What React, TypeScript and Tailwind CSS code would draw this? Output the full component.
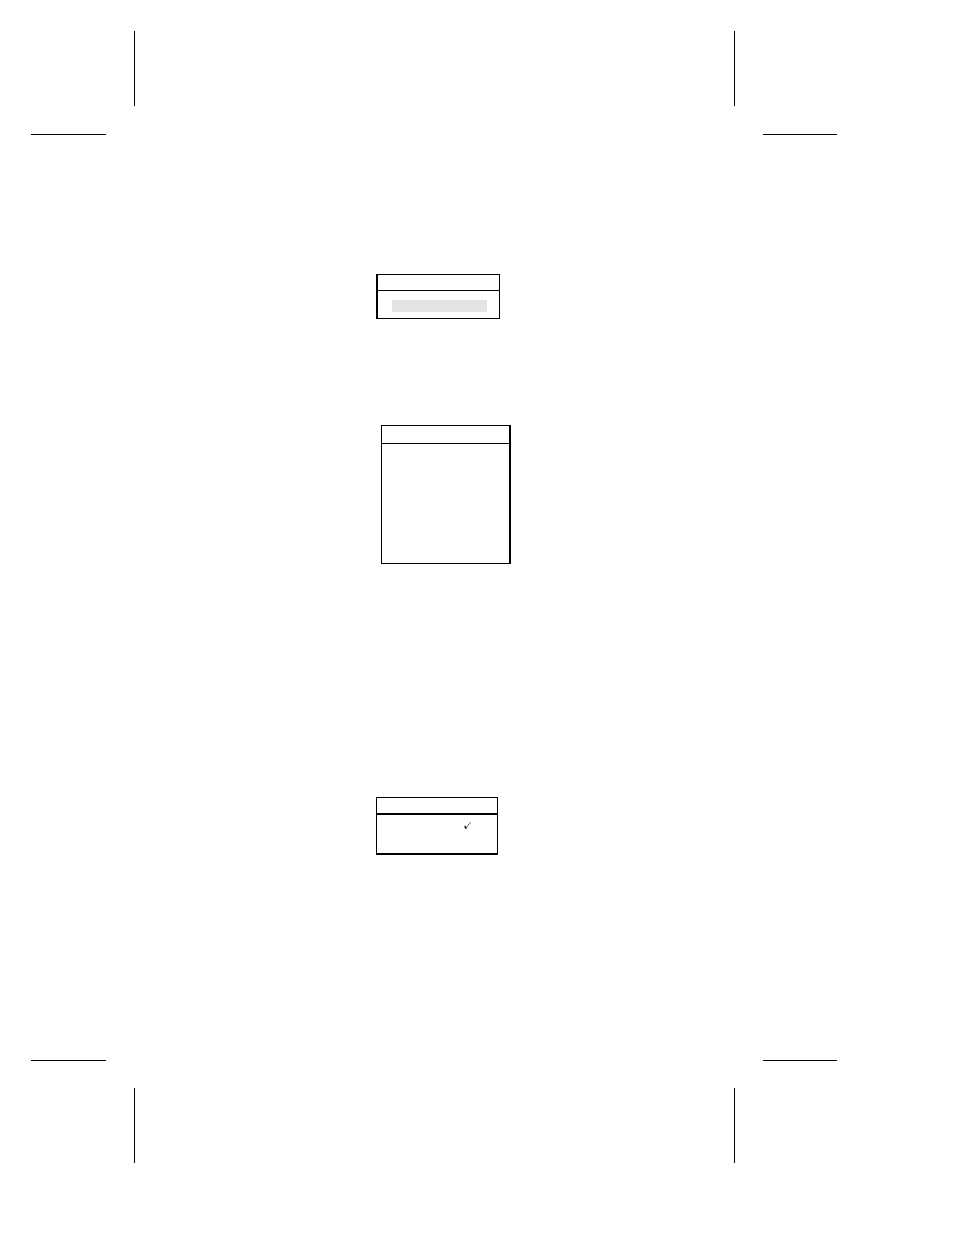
import type { ReactNode } from "react";
import { clsx } from "clsx";

interface MenuPanelProps {
  className?: string;
  headerClassName?: string;
  children?: ReactNode;
}

function MenuPanel({ className, headerClassName, children }: MenuPanelProps) {
  return (
    <section className={clsx("flex flex-col border-black", className)}>
      <header className={clsx("shrink-0 border-black", headerClassName)} />
      {children}
    </section>
  );
}

interface CropMarkProps {
  side: "left" | "right";
  bottom?: boolean;
}

// One page corner: a vertical and a horizontal trim line
function CropMark({ side, bottom }: CropMarkProps) {
  const isLeft = side === "left";

  return (
    <div
      className={clsx(
        "flex justify-between",
        bottom ? "h-[103px] flex-col-reverse" : "h-[104px] flex-col",
        isLeft ? "w-[104px]" : "w-[103px]"
      )}
    >
      <div
        className={clsx(
          "h-[75px] w-px bg-black",
          isLeft ? "self-end" : "self-start"
        )}
      />
      <div
        className={clsx(
          "h-px bg-black",
          isLeft ? "w-[75px] self-start" : "w-[74px] self-end"
        )}
      />
    </div>
  );
}

function CheckMark() {
  return (
    <svg className="h-2 w-2" viewBox="0 0 8 8" fill="none" aria-hidden="true">
      <path d="M0.2 4.3 L1.4 3.6 L2.4 5.6 L2.2 7.1 L1.3 7 Z" fill="#111" />
      <path d="M2 6.7 C3.2 4.2 4.8 2 7 0.2" stroke="#333" strokeWidth="0.8" />
    </svg>
  );
}

export default function App() {
  return (
    <div className="min-h-screen bg-white pt-[31px] pr-[117px] pb-[72px] pl-[31px]">
      <div className="flex justify-between">
        <CropMark side="left" />
        <CropMark side="right" />
      </div>

      <main className="flex flex-col items-start pt-[139px] pb-[205px] pl-[345px]">
        {/* Highlighted entry */}
        <MenuPanel
          className="w-[124px] border border-l-2"
          headerClassName="h-4 border-b"
        >
          <div className="pt-[9px] pr-3 pb-1.5 pl-3.5">
            <div className="h-3 bg-[#e4e4e4]" />
          </div>
        </MenuPanel>

        {/* Empty list */}
        <MenuPanel
          className="mt-[106px] ml-[5px] h-[139px] w-[130px] border border-r-2"
          headerClassName="h-[18px] border-b"
        />

        {/* Ticked entry */}
        <MenuPanel
          className="mt-[233px] h-[58px] w-[122px] border border-b-2"
          headerClassName="h-[17px] border-b-2"
        >
          <div className="flex justify-end pt-[7px] pr-[25px]">
            <CheckMark />
          </div>
        </MenuPanel>
      </main>

      <div className="flex justify-between">
        <CropMark side="left" bottom />
        <CropMark side="right" bottom />
      </div>
    </div>
  );
}
